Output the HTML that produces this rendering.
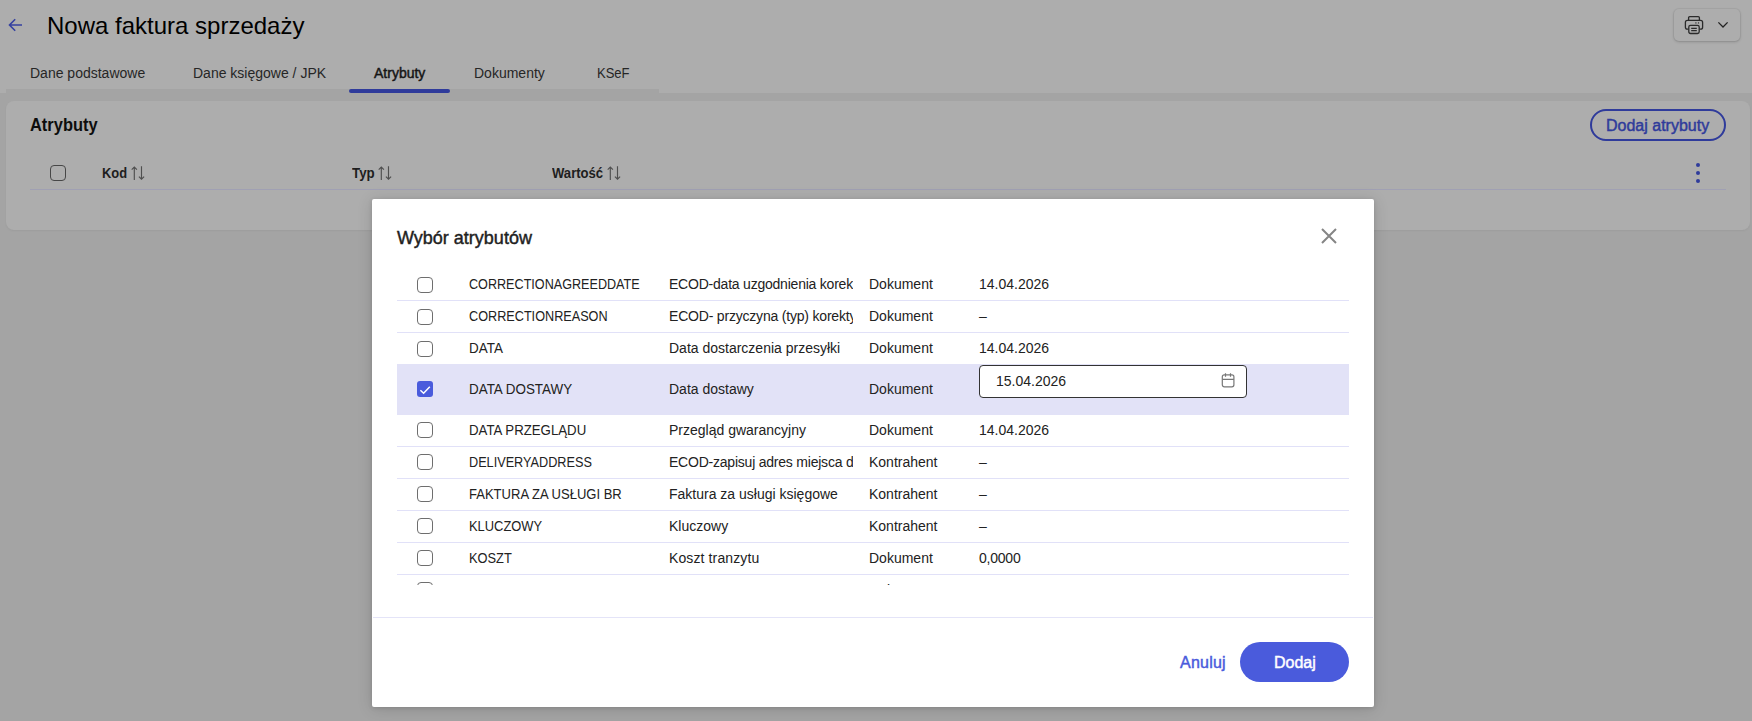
<!DOCTYPE html>
<html>
<head>
<meta charset="utf-8">
<style>
*{box-sizing:border-box;margin:0;padding:0}
html,body{width:1752px;height:721px;overflow:hidden}
body{position:relative;background:#a4a4a4;font-family:"Liberation Sans",sans-serif;color:#222}
.abs{position:absolute}
.nw{white-space:nowrap}
#hdr{left:0;top:0;width:1752px;height:93px;background:#adadad}
#tabstrip{left:6px;top:89px;width:653px;height:4px;background:#a4a4a4}
#ind{left:349px;top:89px;width:101px;height:4px;background:#2f3b9b;border-radius:2px}
.tab{top:64px;font-size:14px;color:#262626;line-height:18px}
#title{top:11px;font-size:24px;line-height:30px;color:#000}
#card{left:6px;top:101px;width:1744px;height:129px;background:#adadad;border-radius:8px;box-shadow:0 1px 2px rgba(0,0,0,.05)}
#printbtn{left:1674px;top:9px;width:66px;height:32px;border-radius:5px;background:#adadad;box-shadow:0 1px 3px rgba(0,0,0,.18),0 0 0 1px rgba(0,0,0,.04)}
.hcell{top:164px;font-size:14px;font-weight:700;color:#1e1e1e;line-height:18px}
.cb{width:16px;height:16px;border:1.5px solid #474747;border-radius:4px}
#dlg{left:372px;top:199px;width:1002px;height:508px;background:#fff;border-radius:2px;box-shadow:0 2px 16px rgba(0,0,0,.14),0 1px 4px rgba(0,0,0,.12)}
#dtitle{left:25px;top:28px;font-size:18px;font-weight:700;color:#1f1f1f;line-height:22px}
.tx{font-size:14px;line-height:16px;color:#222;white-space:nowrap}
.t2{width:184px;overflow:hidden}
.dcb{width:16px;height:16px;border:1.5px solid #6e6e6e;border-radius:4px}
</style>
</head>
<body>
<div id="hdr" class="abs"></div>
<svg class="abs" style="left:7px;top:17px" width="16" height="16" viewBox="0 0 16 16"><path d="M15 8H2.5M8.2 2.3L2.5 8l5.7 5.7" fill="none" stroke="#3440a0" stroke-width="1.6"/></svg>
<div id="title" class="abs nw" style="left:47px;">Nowa faktura sprzedaży</div>
<div id="printbtn" class="abs"></div>
<div id="tabstrip" class="abs"></div><div id="ind" class="abs"></div>
<div id="tab1" class="abs tab nw" style="left:30px;">Dane podstawowe</div>
<div id="tab2" class="abs tab nw" style="left:193px;">Dane księgowe / JPK</div>
<div id="tab3" class="abs tab nw" style="left:374px;font-weight:700;color:#151515;font-weight:400;-webkit-text-stroke:0.45px currentColor;">Atrybuty</div>
<div id="tab4" class="abs tab nw" style="left:474px;">Dokumenty</div>
<div id="tab5" class="abs tab nw" style="left:597px;transform:scaleX(0.9294);transform-origin:0 0;">KSeF</div>
<div id="card" class="abs"></div>
<div id="cardh" class="abs nw" style="left:30px;top:114px;font-size:18px;font-weight:700;line-height:22px;color:#0d0d0d;transform:scaleX(0.9135);transform-origin:0 0;">Atrybuty</div>
<div class="abs cb" style="left:50px;top:165px"></div>
<div id="kod" class="abs hcell nw" style="left:102px;transform:scaleX(0.9231);transform-origin:0 0;">Kod</div>
<svg class="abs" style="left:131px;top:166px" width="15" height="14" viewBox="0 0 15 14"><path d="M3.3 14V0.8M0.7 3.6L3.3 1l2.6 2.6M10.5 0.3V13.2M7.9 10.6L10.5 13.2l2.6-2.6" fill="none" stroke="#4f4f4f" stroke-width="1.15"/></svg>
<div id="typ" class="abs hcell nw" style="left:352px;transform:scaleX(0.9500);transform-origin:0 0;">Typ</div>
<svg class="abs" style="left:378px;top:166px" width="15" height="14" viewBox="0 0 15 14"><path d="M3.3 14V0.8M0.7 3.6L3.3 1l2.6 2.6M10.5 0.3V13.2M7.9 10.6L10.5 13.2l2.6-2.6" fill="none" stroke="#4f4f4f" stroke-width="1.15"/></svg>
<div id="wart" class="abs hcell nw" style="left:552px;transform:scaleX(0.9345);transform-origin:0 0;">Wartość</div>
<svg class="abs" style="left:607px;top:166px" width="15" height="14" viewBox="0 0 15 14"><path d="M3.3 14V0.8M0.7 3.6L3.3 1l2.6 2.6M10.5 0.3V13.2M7.9 10.6L10.5 13.2l2.6-2.6" fill="none" stroke="#4f4f4f" stroke-width="1.15"/></svg>
<div class="abs" style="left:30px;top:189px;width:1696px;height:1px;background:#a0a0b3"></div>
<div class="abs" style="left:1590px;top:109px;width:136px;height:32px;border:2px solid #2f3b9b;border-radius:16px"></div>
<div id="dodajatr" class="abs nw" style="left:1606px;top:116px;font-size:16px;font-weight:700;line-height:20px;color:#2f3b9b;font-weight:400;-webkit-text-stroke:0.45px currentColor;">Dodaj atrybuty</div>
<div class="abs" style="left:1696px;top:163px;width:4px;height:4px;border-radius:2px;background:#2f3b9b"></div>
<div class="abs" style="left:1696px;top:171px;width:4px;height:4px;border-radius:2px;background:#2f3b9b"></div>
<div class="abs" style="left:1696px;top:179px;width:4px;height:4px;border-radius:2px;background:#2f3b9b"></div>
<svg class="abs" style="left:1684px;top:15px" width="20" height="20" viewBox="0 0 20 20" fill="none" stroke="#2a2a2a" stroke-width="1.3">
<path d="M4.6 5V2.8q0-1.2 1.2-1.2h8.4q1.2 0 1.2 1.2V5"/>
<path d="M4.6 14.2H3.4q-2 0-2-2V7.4q0-2 2-2h13.2q2 0 2 2v4.8q0 2-2 2h-1.2"/>
<rect x="4.8" y="10.3" width="10.4" height="8.2" rx="1.7"/>
<path d="M7.2 13.4h5.6M7.2 15.6h5.6"/>
<circle cx="11.9" cy="7.9" r="0.7" fill="#2a2a2a" stroke="none"/><circle cx="14.5" cy="7.9" r="0.7" fill="#2a2a2a" stroke="none"/>
</svg>
<svg class="abs" style="left:1717px;top:21px" width="12" height="8" viewBox="0 0 12 8"><path d="M1.4 1.4l4.6 4.6 4.6-4.6" fill="none" stroke="#222" stroke-width="1.3"/></svg>
<div id="dlg" class="abs">
<div class="abs nw" id="dtitle" style="font-weight:400;-webkit-text-stroke:0.45px currentColor;">Wybór atrybutów</div>
<svg class="abs" style="left:949px;top:29px" width="16" height="16" viewBox="0 0 16 16"><path d="M1 1L15 15M15 1L1 15" fill="none" stroke="#858585" stroke-width="2"/></svg>
<div class="abs" style="left:0;top:69px;width:1002px;height:317px;overflow:hidden">
<div class="abs" style="left:25px;top:32px;width:952px;height:1px;background:#e1e1f8"></div>
<div class="abs dcb" style="left:45px;top:9px"></div>
<div id="r0c1" class="abs tx" style="left:97px;top:8px;transform:scaleX(0.9005);transform-origin:0 0;">CORRECTIONAGREEDDATE</div>
<div id="r0c2" class="abs tx t2" style="left:297px;top:8px;letter-spacing:-0.219px;">ECOD-data uzgodnienia korekty</div>
<div id="r0c3" class="abs tx" style="left:497px;top:8px;">Dokument</div>
<div id="r0c4" class="abs tx" style="left:607px;top:8px;">14.04.2026</div>
<div class="abs" style="left:25px;top:64px;width:952px;height:1px;background:#e1e1f8"></div>
<div class="abs dcb" style="left:45px;top:41px"></div>
<div id="r1c1" class="abs tx" style="left:97px;top:40px;transform:scaleX(0.9046);transform-origin:0 0;">CORRECTIONREASON</div>
<div id="r1c2" class="abs tx t2" style="left:297px;top:40px;letter-spacing:-0.196px;">ECOD- przyczyna (typ) korekty</div>
<div id="r1c3" class="abs tx" style="left:497px;top:40px;">Dokument</div>
<div id="r1c4" class="abs tx" style="left:607px;top:40px;">–</div>
<div class="abs" style="left:25px;top:96px;width:952px;height:1px;background:#e1e1f8"></div>
<div class="abs dcb" style="left:45px;top:73px"></div>
<div id="r2c1" class="abs tx" style="left:97px;top:72px;transform:scaleX(0.9600);transform-origin:0 0;">DATA</div>
<div id="r2c2" class="abs tx t2" style="left:297px;top:72px;">Data dostarczenia przesyłki</div>
<div id="r2c3" class="abs tx" style="left:497px;top:72px;">Dokument</div>
<div id="r2c4" class="abs tx" style="left:607px;top:72px;">14.04.2026</div>
<div class="abs" style="left:25px;top:96px;width:952px;height:51px;background:#e2e2f7"></div>
<svg class="abs" style="left:45px;top:113px" width="16" height="16" viewBox="0 0 16 16"><rect x="0" y="0" width="16" height="16" rx="3" fill="#4a5bdc"/><path d="M3.4 9.2L6.6 12.3L12.8 5.7" fill="none" stroke="#fff" stroke-width="1.5"/></svg>
<div id="r3c1" class="abs tx" style="left:97px;top:113px;transform:scaleX(0.9585);transform-origin:0 0;">DATA DOSTAWY</div>
<div id="r3c2" class="abs tx t2" style="left:297px;top:113px;">Data dostawy</div>
<div id="r3c3" class="abs tx" style="left:497px;top:113px;">Dokument</div>
<div class="abs" style="left:607px;top:97px;width:268px;height:33px;background:#fff;border:1px solid #333;border-radius:4px"></div>
<div id="date" class="abs tx" style="left:624px;top:105px;">15.04.2026</div>
<svg class="abs" style="left:849px;top:104px" width="14" height="16" viewBox="0 0 14 16" fill="none" stroke="#777" stroke-width="1.2"><rect x="1.3" y="2.8" width="11.6" height="12" rx="2"/><path d="M1.3 7.3H12.9M4.5 1.2V4.8M9.5 1.2V4.8"/></svg>
<div class="abs" style="left:25px;top:178px;width:952px;height:1px;background:#e1e1f8"></div>
<div class="abs dcb" style="left:45px;top:154px"></div>
<div id="r4c1" class="abs tx" style="left:97px;top:154px;transform:scaleX(0.9459);transform-origin:0 0;">DATA PRZEGLĄDU</div>
<div id="r4c2" class="abs tx t2" style="left:297px;top:154px;">Przegląd gwarancyjny</div>
<div id="r4c3" class="abs tx" style="left:497px;top:154px;">Dokument</div>
<div id="r4c4" class="abs tx" style="left:607px;top:154px;">14.04.2026</div>
<div class="abs" style="left:25px;top:210px;width:952px;height:1px;background:#e1e1f8"></div>
<div class="abs dcb" style="left:45px;top:186px"></div>
<div id="r5c1" class="abs tx" style="left:97px;top:186px;transform:scaleX(0.9060);transform-origin:0 0;">DELIVERYADDRESS</div>
<div id="r5c2" class="abs tx t2" style="left:297px;top:186px;letter-spacing:-0.220px;">ECOD-zapisuj adres miejsca dostawy</div>
<div id="r5c3" class="abs tx" style="left:497px;top:186px;">Kontrahent</div>
<div id="r5c4" class="abs tx" style="left:607px;top:186px;">–</div>
<div class="abs" style="left:25px;top:242px;width:952px;height:1px;background:#e1e1f8"></div>
<div class="abs dcb" style="left:45px;top:218px"></div>
<div id="r6c1" class="abs tx" style="left:97px;top:218px;transform:scaleX(0.9307);transform-origin:0 0;">FAKTURA ZA USŁUGI BR</div>
<div id="r6c2" class="abs tx t2" style="left:297px;top:218px;">Faktura za usługi księgowe</div>
<div id="r6c3" class="abs tx" style="left:497px;top:218px;">Kontrahent</div>
<div id="r6c4" class="abs tx" style="left:607px;top:218px;">–</div>
<div class="abs" style="left:25px;top:274px;width:952px;height:1px;background:#e1e1f8"></div>
<div class="abs dcb" style="left:45px;top:250px"></div>
<div id="r7c1" class="abs tx" style="left:97px;top:250px;transform:scaleX(0.9205);transform-origin:0 0;">KLUCZOWY</div>
<div id="r7c2" class="abs tx t2" style="left:297px;top:250px;">Kluczowy</div>
<div id="r7c3" class="abs tx" style="left:497px;top:250px;">Kontrahent</div>
<div id="r7c4" class="abs tx" style="left:607px;top:250px;">–</div>
<div class="abs" style="left:25px;top:306px;width:952px;height:1px;background:#e1e1f8"></div>
<div class="abs dcb" style="left:45px;top:282px"></div>
<div id="r8c1" class="abs tx" style="left:97px;top:282px;transform:scaleX(0.9174);transform-origin:0 0;">KOSZT</div>
<div id="r8c2" class="abs tx t2" style="left:297px;top:282px;letter-spacing:0.115px;">Koszt tranzytu</div>
<div id="r8c3" class="abs tx" style="left:497px;top:282px;">Dokument</div>
<div id="r8c4" class="abs tx" style="left:607px;top:282px;letter-spacing:-0.220px;">0,0000</div>
<div class="abs" style="left:25px;top:338px;width:952px;height:1px;background:#e1e1f8"></div>
<div class="abs dcb" style="left:45px;top:314px"></div>
<div id="r9c3" class="abs tx" style="left:497px;top:314px;">Dokument</div>
</div>
<div class="abs" style="left:1px;top:418px;width:1000px;height:1px;background:#e4e4f8"></div>
<div id="anuluj" class="abs nw" style="left:808px;top:454px;font-size:16px;font-weight:700;line-height:20px;color:#4a5bdc;font-weight:400;-webkit-text-stroke:0.45px currentColor;letter-spacing:0.220px;">Anuluj</div>
<div class="abs" style="left:868px;top:443px;width:109px;height:40px;border-radius:20px;background:#4a5bdc"></div>
<div id="dodaj" class="abs nw" style="left:902px;top:454px;font-size:16px;font-weight:700;line-height:20px;color:#fff;font-weight:400;-webkit-text-stroke:0.45px currentColor;">Dodaj</div>
</div>
</body>
</html>
